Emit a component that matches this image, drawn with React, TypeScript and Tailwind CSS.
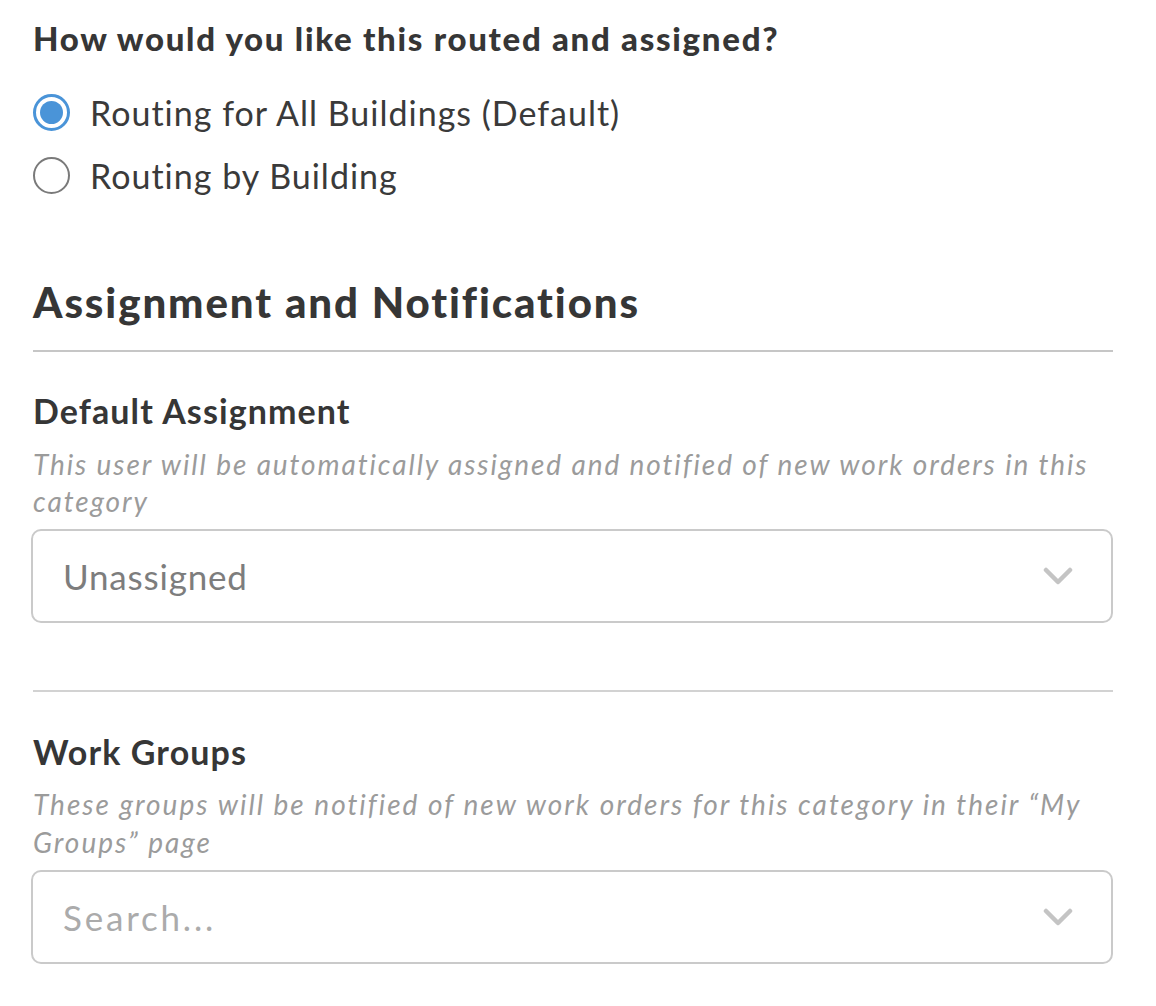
import { useState } from 'react';

const font = { fontFamily: 'Lato, "Open Sans", sans-serif' };

function Radio({ checked }: { checked: boolean }) {
  return checked ? (
    <span className="flex h-[37px] w-[37px] shrink-0 items-center justify-center rounded-full border-[3px] border-[#4a94d8] bg-white">
      <span className="h-[23px] w-[23px] rounded-full bg-[#4a94d8]" />
    </span>
  ) : (
    <span className="h-[37px] w-[37px] shrink-0 rounded-full border-2 border-[#7a7a7a] bg-white" />
  );
}

function Chevron() {
  return (
    <svg width="30" height="18" viewBox="0 0 30 18" fill="none">
      <path d="M3 3l12 12L27 3" stroke="#c4c4c4" strokeWidth="4.5" strokeLinecap="round" strokeLinejoin="round" />
    </svg>
  );
}

function SelectBox({ text, placeholder }: { text: string; placeholder?: boolean }) {
  return (
    <div className="-ml-[2px] flex h-[94px] items-center justify-between rounded-[10px] border-2 border-[#cacaca] bg-white pl-[30px] pr-[38px]">
      <span
        className={`text-[35px] leading-none ${
          placeholder ? 'tracking-[2.8px] text-[#ababab]' : 'tracking-[0.8px] text-[#7d7d7d]'
        }`}
      >
        {text}
      </span>
      <Chevron />
    </div>
  );
}

export default function App() {
  const [route, setRoute] = useState(0);
  const options = ['Routing for All Buildings (Default)', 'Routing by Building'];

  return (
    <div className="min-h-screen bg-white pl-[33px] pr-[43px] pt-[18px] text-[#363636]" style={font}>
      {/* Routing */}
      <h3 className="text-[33px] font-black leading-[40px] tracking-[1.7px]">How would you like this routed and assigned?</h3>
      <div className="mt-[23px] flex flex-col">
        {options.map((label, i) => (
          <label key={label} className="flex h-[63px] cursor-pointer items-center gap-[20px]" onClick={() => setRoute(i)}>
            <Radio checked={route === i} />
            <span className="text-[34px] leading-none tracking-[1px] text-[#3a3a3a]">{label}</span>
          </label>
        ))}
      </div>

      {/* Assignment */}
      <h2 className="mt-[71px] text-[42px] font-black leading-[48px] tracking-[1.9px]">Assignment and Notifications</h2>
      <hr className="mt-[24px] border-t-2 border-[#c6c6c6]" />

      <h4 className="mt-[39px] text-[34px] font-bold leading-[40px] tracking-[1.1px]">Default Assignment</h4>
      <p className="mt-[15px] text-[28px] italic leading-[37px] tracking-[1.9px] text-[#9b9b9b]">
        This user will be automatically assigned and notified of new work orders in this category
      </p>
      <div className="mt-[9px]">
        <SelectBox text="Unassigned" />
      </div>

      <hr className="mt-[67px] border-t-2 border-[#d2d2d2]" />

      <h4 className="mt-[40px] text-[34px] font-bold leading-[40px] tracking-[1.1px]">Work Groups</h4>
      <p className="mt-[13px] text-[28px] italic leading-[38px] tracking-[2px] text-[#9b9b9b]">
        These groups will be notified of new work orders for this category in their “My Groups” page
      </p>
      <div className="mt-[9px]">
        <SelectBox text="Search..." placeholder />
      </div>
    </div>
  );
}
